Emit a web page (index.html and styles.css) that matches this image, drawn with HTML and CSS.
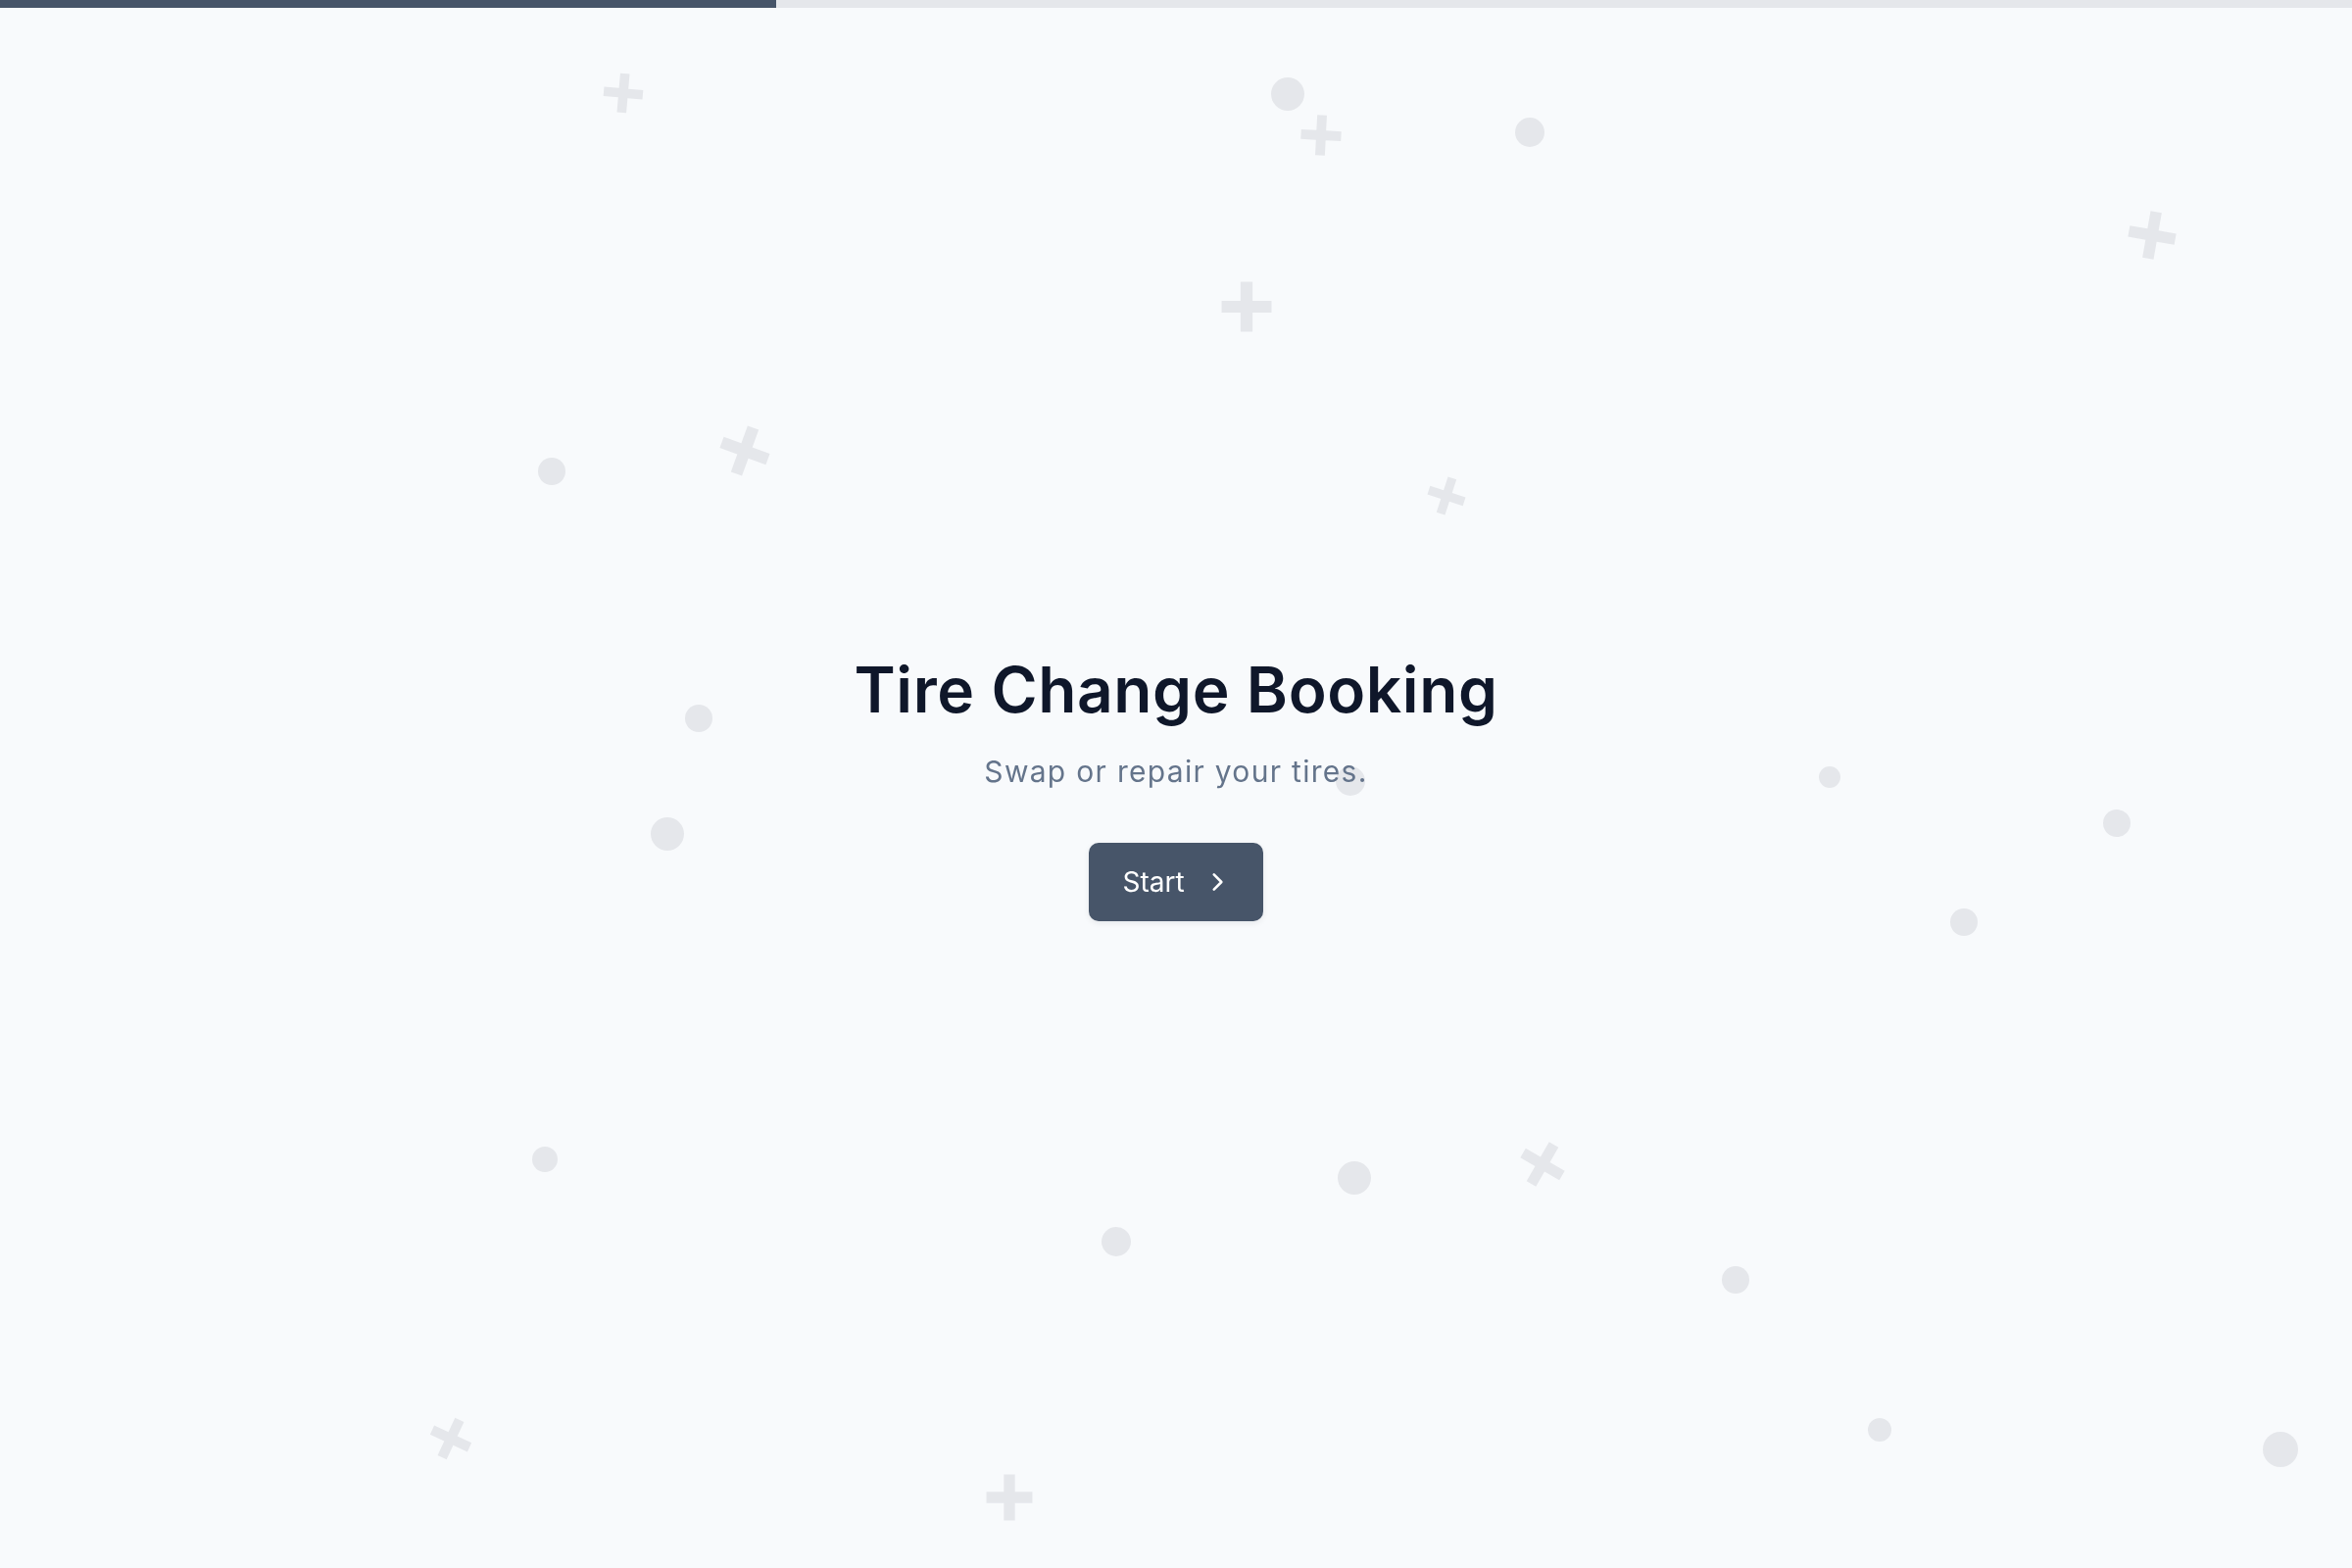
FILE: index.html
```html
<!DOCTYPE html>
<html lang="en">
<head>
  <meta charset="UTF-8" />
  <title>Tire Change Booking</title>
  <meta name="viewport" content="width=device-width, initial-scale=1.0">
  <link rel="stylesheet" href="styles.css">
</head>
<body>
  <div class="progress">
    <div class="progress-fill"></div>
  </div>

  <!-- scattered background shapes -->
  <svg class="backdrop" viewBox="0 0 2400 1600" preserveAspectRatio="none" aria-hidden="true">
    <defs>
      <path id="plus" d="M-0.12 -0.5h0.24v0.38h0.38v0.24h-0.38v0.38h-0.24v-0.38h-0.38v-0.24h0.38z" />
    </defs>
    <g class="shape">
      <circle cx="1314" cy="96" r="17" />
      <circle cx="1561" cy="135" r="15" />
      <circle cx="563" cy="481" r="14" />
      <circle cx="713" cy="733" r="14" />
      <circle cx="681" cy="851" r="17" />
      <circle cx="1378" cy="797" r="15" />
      <circle cx="1867" cy="793" r="11" />
      <circle cx="2160" cy="840" r="14" />
      <circle cx="2004" cy="941" r="14" />
      <circle cx="556" cy="1183" r="13" />
      <circle cx="1382" cy="1202" r="17" />
      <circle cx="1139" cy="1267" r="15" />
      <circle cx="1771" cy="1306" r="14" />
      <circle cx="1918" cy="1459" r="12" />
      <circle cx="2327" cy="1479" r="18" />

      <use href="#plus" transform="translate(636 95) rotate(5) scale(40)" />
      <use href="#plus" transform="translate(1348 138) rotate(3) scale(41)" />
      <use href="#plus" transform="translate(1272 313) scale(51)" />
      <use href="#plus" transform="translate(2196 240) rotate(10) scale(48)" />
      <use href="#plus" transform="translate(760 460) rotate(20) scale(50)" />
      <use href="#plus" transform="translate(1476 506) rotate(18) scale(38)" />
      <use href="#plus" transform="translate(1574 1188) rotate(30) scale(46)" />
      <use href="#plus" transform="translate(460 1468) rotate(25) scale(42)" />
      <use href="#plus" transform="translate(1030 1528) scale(47)" />
    </g>
  </svg>

  <main class="intro">
    <h1>Tire Change Booking</h1>
    <p class="subtitle">Swap or repair your tires.</p>
    <button class="start-btn" type="button">
      Start
      <svg class="chevron" viewBox="0 0 24 24" fill="none" stroke="currentColor" stroke-width="2.4" stroke-linecap="round" stroke-linejoin="round">
        <path d="M9 5l7 7-7 7" />
      </svg>
    </button>
  </main>
</body>
</html>
```

FILE: styles.css
```css
* {
  box-sizing: border-box;
}

html,
body {
  margin: 0;
  height: 100%;
}

body {
  font-family: Inter, "Noto Sans", sans-serif;
  background: #f8fafc;
  color: #0f172a;
  overflow: hidden;
}

.progress {
  position: fixed;
  top: 0;
  left: 0;
  right: 0;
  height: 8px;
  background: #e5e7eb;
  z-index: 2;
}

.progress-fill {
  width: 33%;
  height: 100%;
  background: #475569;
}

.backdrop {
  position: fixed;
  inset: 0;
  width: 100%;
  height: 100%;
  z-index: 0;
}

.shape {
  fill: #e5e7eb;
}

.intro {
  position: relative;
  z-index: 1;
  min-height: 100vh;
  padding-top: 6px;
  display: flex;
  flex-direction: column;
  align-items: center;
  justify-content: center;
  text-align: center;
}

.intro h1 {
  margin: 0;
  font-size: 64px;
  font-weight: 600;
  letter-spacing: 0.6px;
  line-height: 1.2;
}

.subtitle {
  margin: 26px 0 0;
  font-size: 30px;
  letter-spacing: 1.3px;
  color: #64748b;
  line-height: 1.3;
}

.start-btn {
  margin-top: 53px;
  height: 80px;
  padding: 0 34px;
  display: inline-flex;
  align-items: center;
  gap: 20px;
  border: none;
  border-radius: 10px;
  background: #475569;
  color: #fff;
  font-family: inherit;
  font-size: 28px;
  cursor: pointer;
  box-shadow: 0 2px 6px rgba(15, 23, 42, 0.08);
}

.chevron {
  width: 26px;
  height: 26px;
}
```
